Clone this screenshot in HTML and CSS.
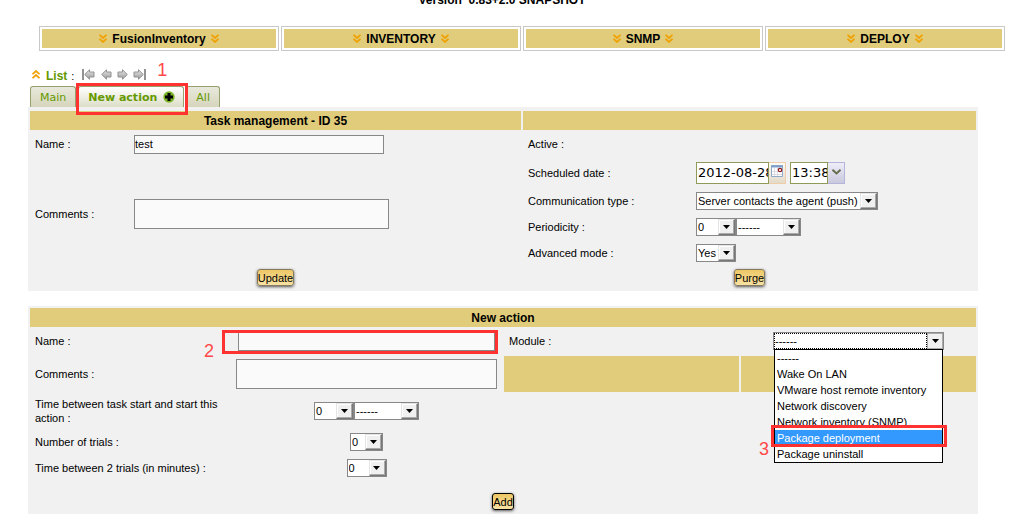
FILE: index.html
```html
<!DOCTYPE html>
<html lang="en">
<head>
<meta charset="utf-8">
<title>Task management</title>
<link rel="stylesheet" href="styles.css">
</head>
<body>
<svg class="defs" aria-hidden="true">
  <defs>
    <symbol id="chev" viewBox="0 0 8 9"><path d="M0.5 0.8L4 4L7.5 0.8M0.5 4.8L4 8L7.5 4.8" fill="none" stroke="#f0a000" stroke-width="1.7"/></symbol>
    <symbol id="tri" viewBox="0 0 7 4"><path d="M0 0H7L3.5 4Z" fill="#000"/></symbol>
    <linearGradient id="grey" x1="0" y1="0" x2="0" y2="1"><stop offset="0" stop-color="#e8e8e8"/><stop offset="1" stop-color="#999"/></linearGradient>
    <symbol id="arrow" viewBox="0 0 11 11"><path d="M0.7 5.5L5.5 0.8V3H10V8H5.5V10.2Z" fill="url(#grey)" stroke="#929292" stroke-linejoin="round"/></symbol>
  </defs>
</svg>

<header class="version">Version&nbsp; 0.83+2.0 SNAPSHOT</header>

<nav class="menu">
  <a href="#fusion"><span><svg class="chev"><use href="#chev"/></svg>FusionInventory<svg class="chev"><use href="#chev"/></svg></span></a>
  <a href="#inventory"><span><svg class="chev"><use href="#chev"/></svg>INVENTORY<svg class="chev"><use href="#chev"/></svg></span></a>
  <a href="#snmp"><span><svg class="chev"><use href="#chev"/></svg>SNMP<svg class="chev"><use href="#chev"/></svg></span></a>
  <a href="#deploy"><span><svg class="chev"><use href="#chev"/></svg>DEPLOY<svg class="chev"><use href="#chev"/></svg></span></a>
</nav>

<main>
  <div class="pager">
    <svg class="chev up"><use href="#chev"/></svg>
    <a class="list" href="#list">List</a><span class="colon">:</span>
    <a class="step first" href="#first" aria-label="First"><svg width="13" height="11"><path d="M1 0V11" stroke="#929292" stroke-width="2"/><use href="#arrow" x="2" width="11" height="11"/></svg></a>
    <a class="step" href="#prev" aria-label="Previous"><svg width="11" height="11"><use href="#arrow" width="11" height="11"/></svg></a>
    <a class="step flip" href="#next" aria-label="Next"><svg width="11" height="11"><use href="#arrow" width="11" height="11"/></svg></a>
    <a class="step flip" href="#last" aria-label="Last"><svg width="13" height="11"><path d="M1 0V11" stroke="#929292" stroke-width="2"/><use href="#arrow" x="2" width="11" height="11"/></svg></a>
  </div>

  <div class="tabs">
    <a class="tab" href="#main">Main</a>
    <div class="current">
      <a class="tab" href="#new">New action <svg class="plus" width="12" height="12" viewBox="0 0 12 12"><circle cx="6" cy="6" r="5.7" fill="#7db52a"/><path d="M4.5 2H7.5V4.5H10V7.5H7.5V10H4.5V7.5H2V4.5H4.5Z" fill="#000"/></svg></a>
      <i class="mark mark-tab"></i><b class="num num-tab">1</b>
    </div>
    <a class="tab" href="#all">All</a>
  </div>

  <form class="panel task">
    <section class="half">
      <h2>Task management - ID 35</h2>
      <div class="fields left">
        <label for="name">Name :</label>
        <div><input class="box" id="name" type="text" value="test"></div>
        <label class="tall" for="comments">Comments :</label>
        <div class="tall"><textarea class="box" id="comments"></textarea></div>
      </div>
      <div class="actions"><button type="button">Update</button></div>
    </section>
    <section class="half">
      <h2></h2>
      <div class="fields right">
        <span>Active :</span><div></div>
        <label for="date">Scheduled date :</label>
        <div class="when">
          <input class="date" id="date" type="text" value="2012-08-28">
          <button class="pick cal" type="button" aria-label="Calendar"><svg width="12" height="13" viewBox="0 0 12 13"><path d="M0.5 0.5H11.5V11.5H0.5Z" fill="#fff" stroke="#8fa9cc"/><path d="M0 1.5H12" stroke="#7f9fcb" stroke-width="2"/><path d="M3.5 3V11M6.5 3V11M1 6.5H11M1 9.5H11" stroke="#dcdce4"/><circle cx="9" cy="5" r="1.7" fill="#fff" stroke="#901818" stroke-width="1.2"/></svg></button>
          <input class="time" type="text" value="13:38" aria-label="Time">
          <button class="pick clock" type="button" aria-label="Time list"><svg width="9" height="6" viewBox="0 0 9 6"><path d="M0.5 0.8L4.5 4.4L8.5 0.8" fill="none" stroke="#66704d" stroke-width="2"/></svg></button>
        </div>
        <label for="comm">Communication type :</label>
        <div><span class="drop w-comm"><select id="comm"><option>Server contacts the agent (push)</option></select><i><svg><use href="#tri"/></svg></i></span></div>
        <label for="per">Periodicity :</label>
        <div><span class="drop w-num"><select id="per"><option>0</option></select><i><svg><use href="#tri"/></svg></i></span><span class="drop w-unit"><select aria-label="Period unit"><option>------</option></select><i><svg><use href="#tri"/></svg></i></span></div>
        <label for="adv">Advanced mode :</label>
        <div><span class="drop w-num"><select id="adv"><option>Yes</option></select><i><svg><use href="#tri"/></svg></i></span></div>
      </div>
      <div class="actions"><button type="button">Purge</button></div>
    </section>
  </form>

  <form class="panel">
    <h2>New action</h2>
    <div class="action-grid">
      <label for="aname">Name :</label>
      <div class="mid name-cell"><input class="box" id="aname" type="text"><i class="mark mark-name"></i><b class="num num-name">2</b></div>
      <label for="module">Module :</label>
      <div class="mid">
        <div class="module">
          <span class="drop focus"><select id="module"><option>------</option></select><i><svg><use href="#tri"/></svg></i></span>
          <ul class="options" role="listbox" aria-label="Module">
            <li role="option">------</li>
            <li role="option">Wake On LAN</li>
            <li role="option">VMware host remote inventory</li>
            <li role="option">Network discovery</li>
            <li role="option">Network inventory (SNMP)</li>
            <li role="option" aria-selected="true" class="on">Package deployment</li>
            <li role="option">Package uninstall</li>
          </ul>
          <i class="mark mark-option"></i><b class="num num-option">3</b>
        </div>
      </div>

      <label for="acomments">Comments :</label>
      <div class="mid"><textarea class="box" id="acomments"></textarea></div>
      <div class="gold"></div>
      <div class="gold"></div>

      <label class="start" for="delay">Time between task start and start this action :</label>
      <div class="mid"><span class="drop w-num"><select id="delay"><option>0</option></select><i><svg><use href="#tri"/></svg></i></span><span class="drop w-unit"><select aria-label="Delay unit"><option>------</option></select><i><svg><use href="#tri"/></svg></i></span></div>

      <label class="start" for="trials">Number of trials :</label>
      <div class="mid"><span class="drop w-small"><select id="trials"><option>0</option></select><i><svg><use href="#tri"/></svg></i></span></div>

      <label class="start" for="between">Time between 2 trials (in minutes) :</label>
      <div class="mid"><span class="drop w-num"><select id="between"><option>0</option></select><i><svg><use href="#tri"/></svg></i></span></div>
    </div>
    <div class="actions add"><button class="default" type="button">Add</button></div>
  </form>
</main>
</body>
</html>
```
FILE: styles.css
```css
* { box-sizing: border-box; }
body {
  margin: 0;
  overflow: hidden;
  background: #fff;
  color: #000;
  font: 11px/14px "Liberation Sans", Arial, sans-serif;
}
input, select, textarea, button { font: inherit; color: inherit; margin: 0; }
a { text-decoration: none; color: #659900; }
.defs { position: absolute; width: 0; height: 0; }

.version {
  margin-top: -8px;
  padding-right: 14px;
  text-align: center;
  font-size: 12px;
  line-height: 16px;
  font-weight: bold;
}

.menu {
  display: grid;
  grid-template-columns: repeat(4, 1fr);
  gap: 2px;
  margin: 18px 13px 0 39px;
}
.menu a {
  border: 1px solid #c8c8c8;
  padding: 2px;
  color: #000;
  font-size: 12px;
  font-weight: bold;
}
.menu span {
  display: flex;
  align-items: center;
  justify-content: center;
  gap: 5px;
  height: 19px;
  background: #e0cc7a;
}
.chev { width: 8px; height: 9px; }
.up { transform: rotate(180deg); }

main { margin: 0 40px 0 28px; }

.pager {
  display: flex;
  align-items: center;
  height: 16px;
  margin-top: 15px;
  padding-left: 4px;
}
.list { margin-left: 6px; padding-top: 4px; font-size: 12px; font-weight: bold; }
.colon { margin: 0 8px 0 4px; padding-top: 4px; }
.step { display: flex; margin-right: 5px; }
.first { margin-right: 6px; }
.flip { transform: scaleX(-1); }

.tabs {
  display: flex;
  align-items: flex-end;
  gap: 2px;
  margin-top: 4px;
  padding-left: 2px;
  font: 11px/14px "DejaVu Sans", Verdana, sans-serif;
}
.tab {
  display: block;
  height: 21px;
  padding: 4px 9px 0 9px;
  border: 1px solid #94a070;
  border-bottom: 0;
  border-radius: 3px 3px 0 0;
  background: linear-gradient(#e9e9dc, #d5d5bc);
}
.current { position: relative; }
.current .tab {
  display: flex;
  gap: 6px;
  padding-right: 8px;
  background: linear-gradient(#fff, #ddddc8);
  font-weight: bold;
}

.mark { position: absolute; z-index: 2; border: 3px solid #ff3232; pointer-events: none; }
.num { position: absolute; z-index: 2; font: 18px/18px "Liberation Sans", Arial, sans-serif; color: #ff4848; }
.mark-tab { left: -2px; right: -4px; top: -3px; height: 32px; }
.num-tab { left: 79px; top: -25px; }
.mark-name { left: -9px; right: 4px; top: 2px; height: 24px; }
.num-name { left: -27px; top: 14px; }
.mark-option { left: -2px; right: -3px; top: 93px; height: 22px; }
.num-option { left: -14px; top: 108px; }

.panel {
  margin-bottom: 15px;
  padding: 2px 2px 0;
  background: #f1f1f1;
}
.task { display: grid; grid-template-columns: 491fr 453fr; gap: 2px; padding-top: 4px; }
h2 {
  height: 19px;
  margin: 0;
  background: #e0cc7a;
  text-align: center;
  font-size: 12px;
  line-height: 20px;
}

.fields { display: grid; align-items: center; height: 136px; padding: 1px 0 0 5px; }
.fields div { display: flex; align-items: center; }
.left { grid-template-columns: 99px 1fr; grid-template-rows: 26px 109px; }
.left .tall { padding-top: 5px; }
.left input { width: 250px; }
.left textarea { width: 255px; }
.right { grid-template-columns: 168px 1fr; grid-template-rows: 26px 31px repeat(3, 26px); }

.box {
  display: block;
  height: 19px;
  padding: 0;
  border: 1px solid #888;
  background: #fafafa;
  resize: none;
}
textarea.box { height: 30px; }

.when input {
  height: 22px;
  padding: 0 0 0 1px;
  border: 1px solid #919b58;
  background: #fff;
  font: 13px/18px "DejaVu Sans", Verdana, sans-serif;
}
.when .date { width: 73px; }
.when .time { width: 38px; margin-left: 4px; }
.pick {
  display: flex;
  align-items: center;
  justify-content: center;
  width: 17px;
  height: 22px;
  padding: 0;
  border: 1px solid #efcdaa;
  border-left: 0;
  background: linear-gradient(#fdfbf4, #e3dac8);
}
.clock { border-color: #b5b5dc; background: linear-gradient(#eeedf8, #c9c8de); }
.pick svg { margin-bottom: 2px; }

.drop {
  position: relative;
  display: inline-flex;
  height: 18px;
  border: 1px solid #888;
  background: #fff;
}
.drop select {
  flex: 1;
  min-width: 0;
  appearance: none;
  padding: 0 0 0 1px;
  border: 0;
  border-radius: 0;
  background: #fff;
}
.drop i {
  position: absolute;
  top: 0;
  right: 0;
  bottom: 0;
  display: flex;
  align-items: center;
  justify-content: center;
  width: 17px;
  padding-right: 1px;
  border: 1px solid;
  border-color: #e4e4e4 #777 #777 #e4e4e4;
  box-shadow: inset -1px -1px #aaa, inset 1px 1px #fff;
  background: #f0f0f0;
  pointer-events: none;
}
.drop svg { width: 7px; height: 4px; }
.w-comm { width: 182px; }
.w-num { width: 40px; }
.w-unit { width: 65px; }
.w-small { width: 33px; }

.actions { display: flex; justify-content: center; height: 25px; padding-top: 3px; }
.actions button {
  height: 17px;
  padding: 0;
  border: 1px solid #857a60;
  border-radius: 3px;
  background: linear-gradient(#edc765, #f8e2a4);
  box-shadow: 0 1px 3px #555;
  line-height: 14px;
}
.actions .default { border-color: #000; }

.action-grid {
  display: grid;
  grid-template-columns: 199fr 271fr 235fr 235fr;
  grid-template-rows: 26px 36px 34px 24px 24px;
  gap: 2px;
  padding-top: 1px;
}
.action-grid label { align-self: center; padding-left: 5px; }
.action-grid .start { grid-column: 1; }
.mid { display: flex; align-items: center; justify-content: center; }
.mid input { width: 257px; }
.mid textarea { width: 261px; }
.name-cell { position: relative; }
.gold { background: #e0cc7a; }
.module { position: relative; width: 171px; }
.focus { display: flex; }
.focus select { margin-right: 16px; border: 1px dotted #000; padding: 0; }
.focus i { width: 16px; padding: 0; border: 1px solid #aaa; box-shadow: none; }
.options {
  position: absolute;
  z-index: 1;
  top: 17px;
  left: 1px;
  right: 1px;
  margin: 0;
  padding: 0;
  list-style: none;
  border: 1px solid #000;
  background: #fff;
}
.options li { height: 16px; padding-left: 2px; line-height: 16px; white-space: nowrap; }
.options .on { background: #3399ff; color: #fff; }
.add { height: 34px; padding-top: 13px; }
```
